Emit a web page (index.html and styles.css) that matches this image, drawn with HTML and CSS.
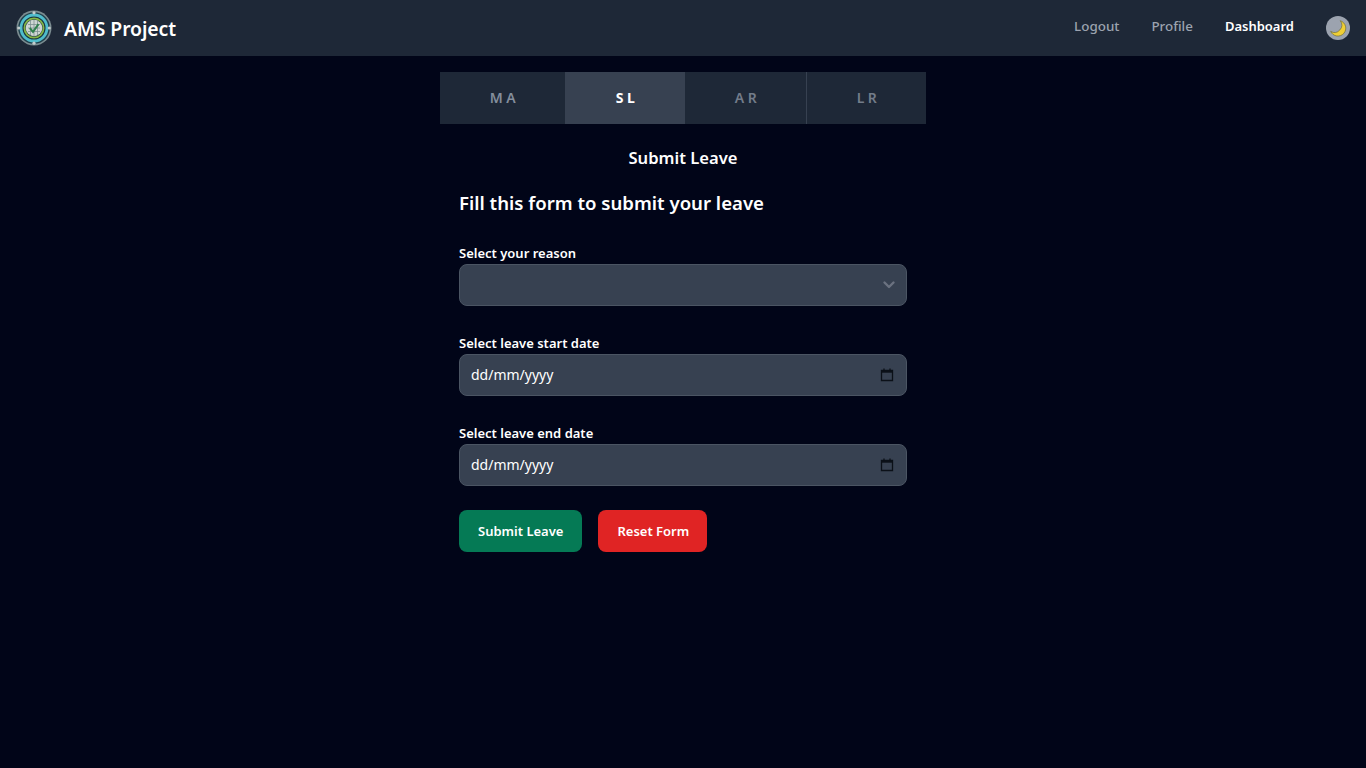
FILE: index.html
```html
<!DOCTYPE html>
<html lang="en">
<head>
<meta charset="utf-8">
<title>AMS Project</title>
<link rel="stylesheet" href="styles.css">
</head>
<body>
<nav class="navbar">
  <a class="brand">
    <svg class="logo" viewBox="0 0 36 36" aria-hidden="true">
      <circle cx="18" cy="18" r="17.5" fill="#7b8c90"/>
      <circle cx="18" cy="18" r="15.8" fill="#20404c"/>
      <circle cx="18" cy="18" r="13" fill="none" stroke="#4fbccb" stroke-width="2.8"/>
      <circle cx="18" cy="18" r="11" fill="#15303a"/>
      <circle cx="18" cy="18" r="9.6" fill="none" stroke="#86b545" stroke-width="1.8"/>
      <circle cx="18" cy="18" r="8.3" fill="#cdd6d2"/>
      <path d="M12 14.500h12M12 18h12M12 21.500h12M14.500 11v14M18 10v16M21.500 11v14" stroke="#7e9192" stroke-width=".8"/>
      <path d="M13.800 18l3.200 3.800 5.500-7.600" fill="none" stroke="#2f7f4c" stroke-width="2"/>
      <circle cx="18" cy="2.800" r="1.600" fill="#c3cccc"/>
      <circle cx="18" cy="33.200" r="1.600" fill="#c3cccc"/>
      <circle cx="2.800" cy="18" r="1.600" fill="#c3cccc"/>
      <circle cx="33.200" cy="18" r="1.600" fill="#c3cccc"/>
    </svg>
    <span class="brand-name">AMS Project</span>
  </a>
  <div class="nav-links">
    <a class="nav-link">Logout</a>
    <a class="nav-link">Profile</a>
    <a class="nav-link active">Dashboard</a>
    <span class="theme-toggle">
      <svg viewBox="0 0 16 16" width="18" height="18" aria-hidden="true">
        <path d="M10 1.500A7 7 0 1 1 1.500 11A6.500 6.500 0 0 0 10 1.500z" fill="#f0cf35" stroke="#6f6d34" stroke-width=".6"/>
      </svg>
    </span>
  </div>
</nav>

<main class="container">
  <div class="tabs">
    <a class="tab tab-first">MA</a>
    <a class="tab tab-active">SL</a>
    <a class="tab tab-third">AR</a>
    <a class="tab tab-last">LR</a>
  </div>
  <h1 class="page-title">Submit Leave</h1>
  <form class="form">
    <h2 class="form-title">Fill this form to submit your leave</h2>
    <div class="field">
      <label class="label">Select your reason</label>
      <div class="control">
        <span></span>
        <svg class="chevron" viewBox="0 0 20 20" width="20" height="20" aria-hidden="true">
          <path d="M5.500 7.500l4.500 4.500 4.500-4.500" fill="none" stroke="#6b7280" stroke-width="2.400" stroke-linecap="round" stroke-linejoin="round"/>
        </svg>
      </div>
    </div>
    <div class="field">
      <label class="label">Select leave start date</label>
      <div class="control">
        <span class="date-text">dd/mm/yyyy</span>
        <svg class="calendar" viewBox="0 0 14 14" width="14" height="14" aria-hidden="true">
          <path d="M1.500 2.500h11v10h-11z" fill="none" stroke="#0b1018" stroke-width="1.300"/>
          <path d="M1.500 2.500h11v2.200h-11z" fill="#0b1018"/>
          <path d="M4 .6v2M10 .6v2" stroke="#0b1018" stroke-width="1.300"/>
        </svg>
      </div>
    </div>
    <div class="field">
      <label class="label">Select leave end date</label>
      <div class="control">
        <span class="date-text">dd/mm/yyyy</span>
        <svg class="calendar" viewBox="0 0 14 14" width="14" height="14" aria-hidden="true">
          <path d="M1.500 2.500h11v10h-11z" fill="none" stroke="#0b1018" stroke-width="1.300"/>
          <path d="M1.500 2.500h11v2.200h-11z" fill="#0b1018"/>
          <path d="M4 .6v2M10 .6v2" stroke="#0b1018" stroke-width="1.300"/>
        </svg>
      </div>
    </div>
    <div class="actions">
      <button type="button" class="btn btn-green">Submit Leave</button>
      <button type="button" class="btn btn-red">Reset Form</button>
    </div>
  </form>
</main>
</body>
</html>
```

FILE: styles.css
```css
* { box-sizing: border-box; }
html, body { height: 100%; }
body {
  margin: 0;
  background: #010518;
  color: #fff;
  font-family: "Noto Sans", "Open Sans", sans-serif;
  overflow: hidden;
}
.navbar {
  height: 56px;
  background: #1e2837;
  display: flex;
  align-items: center;
  justify-content: space-between;
  padding: 0 16px;
}
.brand { display: flex; align-items: center; gap: 12px; }
.logo { width: 36px; height: 36px; display: block; }
.brand-name { font-size: 19.4px; font-weight: 600; line-height: 28px; letter-spacing: -.1px; margin-top: 2px; }
.nav-links { display: flex; align-items: center; gap: 32px; }
.nav-link { font-size: 13.4px; font-weight: 500; line-height: 20px; color: #9ca3af; margin-top: -5px; }
.nav-link.active { color: #fff; font-weight: 600; font-size: 13px; }
.theme-toggle {
  width: 24px;
  height: 24px;
  border-radius: 50%;
  background: #9ca3af;
  display: flex;
  align-items: center;
  justify-content: center;
}
.container { width: 486px; margin: 16px auto 0; }
.tabs { display: flex; height: 52px; background: #1e2837; }
.tab {
  flex: 0 0 120px;
  display: flex;
  align-items: center;
  justify-content: center;
  padding: 0 0 2px 4px;
  font-size: 14px;
  font-weight: 600;
  letter-spacing: 3.500px;
  color: #737c8a;
}
.tab-first { flex-basis: 125px; color: #848e9c; }
.tab-active { background: #374151; color: #fff; font-weight: 700; }
.tab-third { flex-basis: 122px; border-right: 1px solid #374151; }
.tab-last { flex: 1; }
.page-title {
  margin: 22px 0 0;
  font-size: 16.6px;
  font-weight: 600;
  line-height: 24px;
  text-align: center;
}
.form { padding: 0 19px; }
.form-title {
  margin: 19px 0 0;
  font-size: 18.6px;
  font-weight: 600;
  line-height: 28px;
}
.field { margin-top: 26px; }
.field + .field { margin-top: 27px; }
.label {
  display: block;
  font-size: 13px;
  font-weight: 600;
  line-height: 20px;
  height: 21px;
}
.control {
  height: 42px;
  background: #374151;
  border: 1px solid #4b5563;
  border-radius: 8px;
  display: flex;
  align-items: center;
  justify-content: space-between;
  padding: 0 12px 0 11px;
  font-size: 14px;
  color: #fff;
}
.date-text { padding-bottom: 1px; }
.chevron { margin-right: -5px; }
.actions { display: flex; gap: 16px; margin-top: 24px; }
.btn {
  height: 42px;
  border: 0;
  border-radius: 8px;
  padding: 0 19px;
  color: #fff;
  font-family: inherit;
  font-size: 13px;
  font-weight: 600;
}
.btn-green { background: #057a55; }
.btn-red { background: #e02424; padding-right: 18px; }
```
